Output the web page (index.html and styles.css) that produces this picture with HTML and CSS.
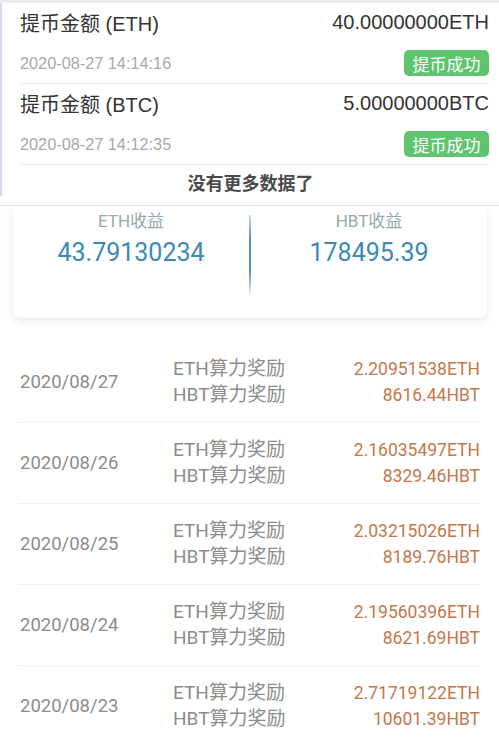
FILE: index.html
```html
<!DOCTYPE html>
<html lang="zh">
<head>
<meta charset="utf-8">
<title>收益记录</title>
<link rel="stylesheet" href="styles.css">
</head>
<body>
<div class="topbar"></div>
<section class="wpanel">
  <div class="wrow">
    <div class="wline">
      <span class="wtitle">提币金额 (ETH)</span>
      <span class="wamount">40.00000000ETH</span>
    </div>
    <div class="wline2">
      <span class="wdate">2020-08-27 14:14:16</span>
      <span class="badge">提币成功</span>
    </div>
  </div>
  <div class="wrow">
    <div class="wline">
      <span class="wtitle">提币金额 (BTC)</span>
      <span class="wamount">5.00000000BTC</span>
    </div>
    <div class="wline2">
      <span class="wdate">2020-08-27 14:12:35</span>
      <span class="badge">提币成功</span>
    </div>
  </div>
  <div class="nomore">没有更多数据了</div>
</section>
<div class="split"></div>
<section class="card">
  <div class="stat">
    <div class="slabel">ETH收益</div>
    <div class="svalue">43.79130234</div>
  </div>
  <div class="vdiv"></div>
  <div class="stat">
    <div class="slabel">HBT收益</div>
    <div class="svalue">178495.39</div>
  </div>
</section>
<section class="list">
  <div class="row">
    <div class="date">2020/08/27</div>
    <div class="labels"><div>ETH算力奖励</div><div>HBT算力奖励</div></div>
    <div class="vals"><div>2.20951538ETH</div><div>8616.44HBT</div></div>
  </div>
  <div class="row">
    <div class="date">2020/08/26</div>
    <div class="labels"><div>ETH算力奖励</div><div>HBT算力奖励</div></div>
    <div class="vals"><div>2.16035497ETH</div><div>8329.46HBT</div></div>
  </div>
  <div class="row">
    <div class="date">2020/08/25</div>
    <div class="labels"><div>ETH算力奖励</div><div>HBT算力奖励</div></div>
    <div class="vals"><div>2.03215026ETH</div><div>8189.76HBT</div></div>
  </div>
  <div class="row">
    <div class="date">2020/08/24</div>
    <div class="labels"><div>ETH算力奖励</div><div>HBT算力奖励</div></div>
    <div class="vals"><div>2.19560396ETH</div><div>8621.69HBT</div></div>
  </div>
  <div class="row">
    <div class="date">2020/08/23</div>
    <div class="labels"><div>ETH算力奖励</div><div>HBT算力奖励</div></div>
    <div class="vals"><div>2.71719122ETH</div><div>10601.39HBT</div></div>
  </div>
</section>
</body>
</html>
```

FILE: styles.css
```css
html, body {
  margin: 0;
  padding: 0;
  background: #ffffff;
}
body {
  width: 499px;
  height: 739px;
  overflow: hidden;
  font-family: "Liberation Sans", "Noto Sans CJK SC", sans-serif;
}
.topbar {
  height: 3px;
  background: #ececec;
}
.wpanel {
  border-left: 2px solid #dad6ef;
  height: 193px;
  box-sizing: border-box;
}
.wrow {
  margin: 0 10px 0 18px;
  padding: 5px 0 7px;
  border-bottom: 1px solid #ececec;
}
.wline {
  display: flex;
  justify-content: space-between;
  align-items: center;
  height: 28px;
  font-size: 20px;
  color: #333333;
}
.wline2 {
  display: flex;
  justify-content: space-between;
  align-items: center;
  height: 26px;
  margin-top: 14px;
}
.wdate {
  font-size: 16.3px;
  color: #a8a8a8;
}
.badge {
  display: flex;
  align-items: center;
  justify-content: center;
  width: 85px;
  height: 26px;
  border-radius: 5px;
  background: #5ec46d;
  color: #ffffff;
  font-size: 17px;
}
.nomore {
  text-align: center;
  padding-top: 6px;
  line-height: 26px;
  font-size: 18px;
  font-weight: bold;
  color: #4a4a4a;
}
.split {
  margin-top: 9px;
  height: 1px;
  background: #e6e6e6;
}
.card {
  margin: 0 12px 0 13px;
  height: 112px;
  box-sizing: border-box;
  padding-top: 3px;
  display: flex;
  background: #ffffff;
  border-radius: 0 0 8px 8px;
  box-shadow: 0 3px 8px rgba(0, 0, 0, 0.09);
  font-family: Roboto, "Noto Sans CJK SC", sans-serif;
}
.stat {
  flex: 1;
  text-align: center;
}
.slabel {
  line-height: 24px;
  font-size: 17px;
  color: #95a9ae;
}
.svalue {
  margin-top: 4px;
  line-height: 32px;
  font-size: 25px;
  color: #3b8ab6;
}
.vdiv {
  width: 2px;
  height: 80px;
  margin-top: 6px;
  background: linear-gradient(to bottom, rgba(80, 140, 175, 0.3), #5a90b2 30%, #5a90b2 70%, rgba(80, 140, 175, 0.1));
}
.list {
  margin: 24px 19px 0 18px;
  font-family: Roboto, "Noto Sans CJK SC", sans-serif;
}
.row {
  display: grid;
  grid-template-columns: 155px 1fr auto;
  align-items: center;
  padding: 14px 0;
  border-bottom: 1px solid #efefef;
  line-height: 26px;
}
.date {
  padding-left: 2px;
  font-size: 18.5px;
  color: #8c8c8c;
}
.labels {
  font-size: 19px;
  color: #8c8c8c;
}
.vals {
  text-align: right;
  font-size: 17.5px;
  color: #c2784b;
}
```
